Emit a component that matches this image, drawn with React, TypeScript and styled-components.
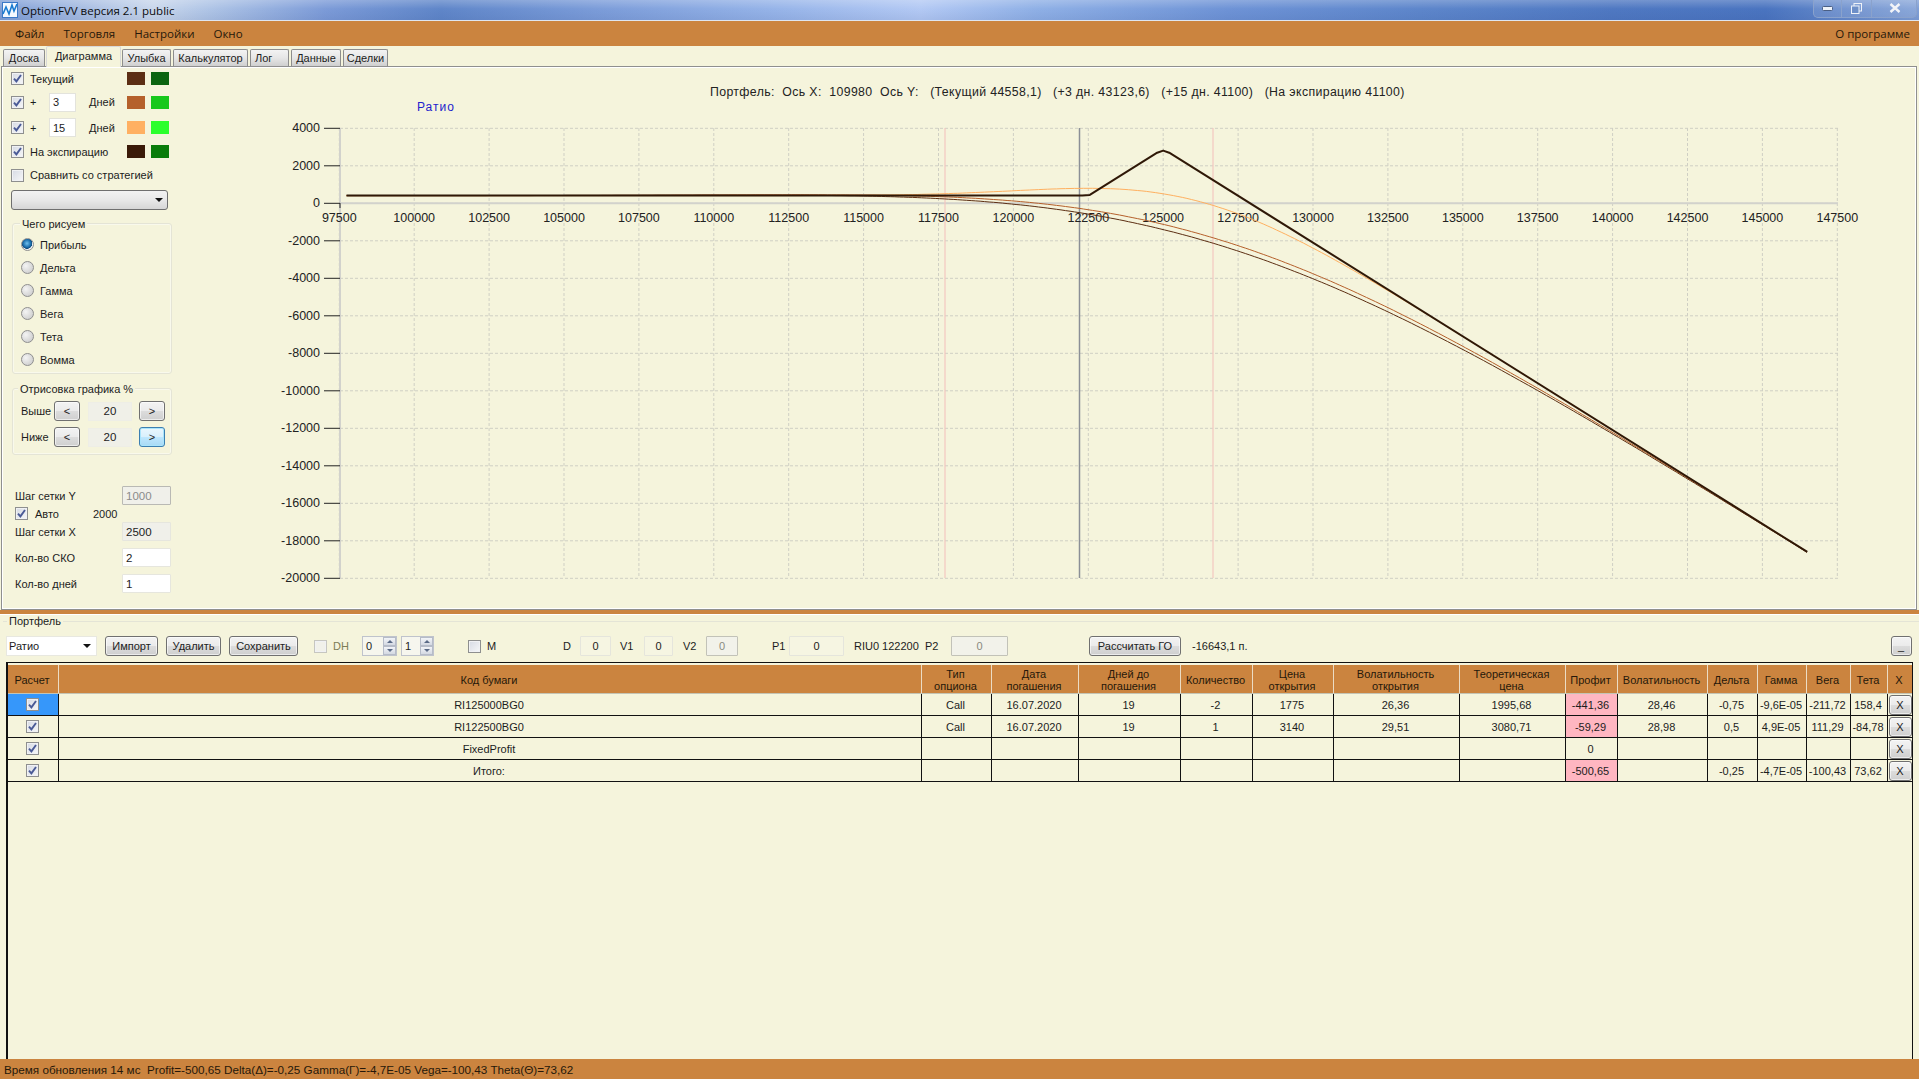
import React from "react";
import styled, { createGlobalStyle, css } from "styled-components";

const CREAM = "#f5f4dc";
const PERU = "#cb843f";
const UI = `"Liberation Sans", Arial, sans-serif`;
const WIN = `"Open Sans", "Noto Sans", sans-serif`;

const Global = createGlobalStyle`
  html, body { margin: 0; padding: 0; background: ${CREAM}; }
  * { box-sizing: border-box; }
`;

const Screen = styled.div`
  width: 1919px; height: 1079px; display: flex; flex-direction: column; overflow: hidden;
  font: 11px ${UI}; color: #1c1c1c; background: ${CREAM};
`;

/* ---------- window chrome ---------- */
const TitleBar = styled.div`
  height: 21px; flex: none; display: flex; align-items: center; position: relative;
  background:
    linear-gradient(180deg, rgba(255,255,255,.22), rgba(255,255,255,0) 45%, rgba(30,50,110,.08)),
    linear-gradient(90deg, #7f9ed6 0, #c9d7ec 8%, #aec4e6 11%, #7c9bd8 17%, #5f86c9 23%, #7b9cd9 31%, #95b3e8 40%, #b3c9f4 48%, #8fb0e6 54%, #6e93d6 64%, #5d86cb 74%, #4f78c2 84%, #4a74c0 92%, #7f9fd6 100%);
  border-bottom: 1px solid #dfe6f0;
`;
const AppIcon = styled.svg` width: 16px; height: 16px; margin-left: 2px; flex: none; `;
const TitleText = styled.span` margin-left: 3px; font: 11.5px ${WIN}; color: #0c0c0c; `;
const WinButtons = styled.div`
  margin-left: auto; margin-right: 2px; height: 18px; width: 104px; display: grid; grid-template-columns: 27px 30px 47px; margin-top: -3px;
  border: 1px solid #8aa2cc; border-top: 0; border-radius: 0 0 5px 5px; background: rgba(255,255,255,.1);
`;
const WinBtn = styled.div`
  display: flex; align-items: center; justify-content: center;
  & + & { border-left: 1px solid #8aa2cc; }
`;
const MenuBar = styled.div`
  height: 25px; flex: none; background: ${PERU}; display: flex; align-items: center; padding: 0 9px 0 15px; gap: 19px;
  font: 11.5px ${WIN}; color: #26180a;
`;
const MenuItem = styled.span<{ $right?: boolean }>` ${p => p.$right && css`margin-left: auto;`} `;
const TabStrip = styled.div`
  height: 20px; flex: none; display: flex; align-items: flex-end; padding-left: 3px; gap: 2px; position: relative; z-index: 1;
`;
const Tab = styled.div<{ $w: number; $active?: boolean; $left?: boolean }>`
  width: ${p => p.$w}px; height: 17px; display: flex; align-items: center; justify-content: ${p => p.$left ? "flex-start" : "center"}; font-size: 11px;
  ${p => p.$left && css`padding-left: 4px;`}
  border: 1px solid #8d8d8d; border-bottom: 0; border-radius: 2px 2px 0 0;
  background: linear-gradient(180deg, #f3f3f3, #e6e6e6 50%, #cfcfcf);
  ${p => p.$active && css`
    height: 21px; margin: 0 -1px 0 -1px; border-color: #d8d8d8; background: ${CREAM}; margin-bottom: -1px; border-bottom: 0; padding-bottom: 3px;
  `}
`;
const TabPage = styled.div`
  height: 544px; flex: none; margin: 0 2px 0 1px; border: 1px solid #8f8f8f; box-shadow: inset 0 0 0 1px #fff;
  display: flex; background: ${CREAM};
`;
const Splitter = styled.div` height: 4px; flex: none; background: ${PERU}; `;

/* ---------- left panel ---------- */
const Side = styled.div` width: 181px; flex: none; display: flex; flex-direction: column; padding-left: 9px; `;
const SideRow = styled.div<{ $h: number }>` height: ${p => p.$h}px; flex: none; display: flex; align-items: center; width: 158px; `;
const CheckBox = styled.span<{ $disabled?: boolean }>`
  width: 13px; height: 13px; flex: none; display: inline-flex; align-items: center; justify-content: center;
  border: 1px solid #8e8f8f; background: linear-gradient(135deg, #d6dae4, #f6f7f8);
  box-shadow: inset 0 0 0 1px #f0f1f4;
  ${p => p.$disabled && css`border-color: #c6c6c0; background: #f1f1ea;`}
`;
const Mark = styled.svg` width: 9px; height: 9px; `;
const SideLabel = styled.span<{ $ml?: number }>` margin-left: ${p => p.$ml ?? 6}px; flex: 1; white-space: nowrap; `;
const Plus = styled.span` margin-left: 6px; width: 19px; `;
const SmallInput = styled.span`
  width: 27px; height: 19px; background: #fff; border: 1px solid #e3e3dc; display: flex; align-items: center; padding-left: 3px; flex: none;
`;
const Swatch = styled.span<{ $c: string }>` width: 18px; height: 13px; flex: none; background: ${p => p.$c}; & + & { margin-left: 6px; } `;
const Combo = styled.div`
  width: 157px; height: 20px; margin: 2px 0 0 0; flex: none; border: 1px solid #6f6f6f; border-radius: 3px;
  background: linear-gradient(180deg, #f2f2f2, #e8e8e8 50%, #d6d6d6); display: flex; align-items: center; justify-content: flex-end; padding-right: 4px;
`;
const ComboArrow = styled.span` width: 0; height: 0; border: 4px solid transparent; border-top: 4px solid #111; border-bottom: 0; `;
const Group = styled.div<{ $h: number; $mt: number }>`
  position: relative; width: 160px; height: ${p => p.$h}px; margin: ${p => p.$mt}px 0 0 1px; flex: none;
  border: 1px solid #e4e4d6; border-radius: 3px; box-shadow: inset 0 0 0 1px rgba(255,255,255,.45);
`;
const Legend = styled.span<{ $l: number }>`
  position: absolute; left: ${p => p.$l}px; top: -6px; background: ${CREAM}; padding: 0 2px; line-height: 12px; white-space: nowrap;
`;
const RadioList = styled.div` padding-top: 9px; display: flex; flex-direction: column; `;
const RadioRow = styled.div` height: 23px; display: flex; align-items: center; padding-left: 8px; gap: 6px; `;
const Radio = styled.span<{ $on?: boolean }>`
  width: 13px; height: 13px; border-radius: 50%; border: 1px solid #8f8f8f; flex: none;
  background: radial-gradient(circle at 35% 35%, #f4f4f4, #cfcfcf 80%);
  ${p => p.$on && css`background: radial-gradient(circle at 45% 40%, #6fc0ee 0, #1769a8 45%, #154a78 58%, #eef0f2 62%);`}
`;
const StepList = styled.div` padding: 12px 0 0 8px; display: flex; flex-direction: column; gap: 6px; `;
const StepRow = styled.div` height: 20px; display: flex; align-items: center; `;
const StepName = styled.span` width: 33px; `;
const Btn = styled.div<{ $w: number; $hot?: boolean; $h?: number }>`
  width: ${p => p.$w}px; height: ${p => p.$h ?? 20}px; flex: none; display: flex; align-items: center; justify-content: center; border-radius: 3px;
  border: 1px solid #707070; box-shadow: inset 0 0 0 1px rgba(255,255,255,.6); color: #222;
  background: linear-gradient(180deg, #f3f3f3 0, #ebebeb 48%, #dcdcdc 52%, #cfcfcf 100%);
  ${p => p.$hot && css`
    border-color: #3c7fb1; box-shadow: inset 0 0 0 1px #a9e4fb;
    background: linear-gradient(180deg, #eaf6fd 0, #d9f0fc 48%, #bee6fd 52%, #a7d9f5 100%);
  `}
`;
const Readout = styled.span`
  width: 44px; height: 19px; margin: 0 7px 0 8px; flex: none; background: #f0f0e8; border: 1px solid #eeeee6;
  display: flex; align-items: center; justify-content: center; font-size: 11.5px;
`;
const FormBlock = styled.div` margin: 31px 0 0 4px; display: flex; flex-direction: column; width: 156px; `;
const FormRow = styled.div<{ $mt?: number }>` height: 19px; margin-top: ${p => p.$mt ?? 0}px; display: flex; align-items: center; justify-content: space-between; `;
const AutoRow = styled.div` height: 17px; display: flex; align-items: center; `;
const AutoLabel = styled.span` margin-left: 7px; width: 58px; `;
const FormInput = styled.span<{ $muted?: boolean; $grey?: boolean }>`
  width: 49px; height: 19px; background: ${p => (p.$muted || p.$grey ? "#f0f0ea" : "#fff")}; border: 1px solid ${p => p.$muted ? "#b9b9b4" : "#e6e6de"};
  color: ${p => p.$muted ? "#8b8b8b" : "#222"}; display: flex; align-items: center; padding-left: 3px; border-radius: 1px; font-size: 11.5px;
`;

/* ---------- chart ---------- */
const ChartPane = styled.div` flex: 1; min-width: 0; position: relative; display: flex; flex-direction: column; `;
const ChartTitle = styled.div`
  height: 47px; flex: none; padding: 18px 0 0 527px; font: 12.3px ${UI}; color: #222; white-space: pre; letter-spacing: .37px;
`;
const SeriesName = styled.div`
  position: absolute; left: 234px; top: 33px; font: 12px ${UI}; letter-spacing: 1px; color: #2222cc;
`;
const ChartSvg = styled.svg` display: block; flex: none; `;
const AxisLabel = styled.text` font: 12.5px ${UI}; fill: #222; `;

function cdf(x: number) {
  const t = 1 / (1 + 0.2316419 * Math.abs(x));
  const d = 0.3989423 * Math.exp((-x * x) / 2);
  const p = d * t * (0.3193815 + t * (-0.3565638 + t * (1.781478 + t * (-1.821256 + t * 1.330274))));
  return x > 0 ? 1 - p : p;
}
function call(f: number, k: number, iv: number, days: number) {
  const s = iv * Math.sqrt(days / 365);
  const d1 = (Math.log(f / k) + (s * s) / 2) / s;
  return f * cdf(d1) - k * cdf(d1 - s);
}
const px = (v: number) => 338.3 + ((v - 97500) / 2500) * 74.9;
const py = (v: number) => 203.3 - v * 0.01875;
const premium = 2 * 1775 - 3140;
function curve(days: number) {
  const pts: string[] = [];
  for (let v = 97740; v <= 146500; v += 150) {
    const val = premium + call(v, 122500, 0.2898, days) - 2 * call(v, 125000, 0.2846, days);
    pts.push(`${px(v).toFixed(1)},${py(val).toFixed(1)}`);
  }
  return pts.join(" ");
}
const expiry = [[97740, premium], [122300, premium], [122550, premium + 40], [124800, premium + 2290], [125000, premium + 2400], [125200, premium + 2290], [146500, premium + 2500 - 21500 * 1]]
  .map(([a, b]) => `${px(a).toFixed(1)},${py(b).toFixed(1)}`).join(" ");

const xVals = Array.from({ length: 21 }, (_, i) => 97500 + i * 2500);
const yVals = Array.from({ length: 13 }, (_, i) => 4000 - i * 2000);

function Chart() {
  return (
    <ChartSvg width={1733} height={495} viewBox="182 114 1733 495">
      {yVals.map(v => <line key={v} x1={339} x2={1837} y1={py(v)} y2={py(v)} stroke="#cfcfc4" strokeDasharray="3 2" />)}
      {xVals.map(v => <line key={v} x1={px(v)} x2={px(v)} y1={128} y2={578} stroke="#cfcfc4" strokeDasharray="3 2" />)}
      <line x1={339} x2={339} y1={128} y2={578} stroke="#d2d2cc" strokeWidth={2} />
      <line x1={339} x2={1837} y1={py(0)} y2={py(0)} stroke="#d2d2cc" strokeWidth={2} />
      <line x1={944} x2={944} y1={128} y2={578} stroke="#f3c6c0" strokeWidth={1.2} />
      <line x1={1212} x2={1212} y1={128} y2={578} stroke="#f3c6c0" strokeWidth={1.2} />
      <line x1={1078.5} x2={1078.5} y1={128} y2={578} stroke="#8b8f96" strokeWidth={1.5} />
      {yVals.map(v => <line key={v} x1={323} x2={339} y1={py(v)} y2={py(v)} stroke="#222" />)}
      <line x1={339} x2={339} y1={203} y2={208} stroke="#222" />
      {yVals.map(v => <AxisLabel key={v} x={319} y={py(v) + 3.7} textAnchor="end">{v}</AxisLabel>)}
      {xVals.map(v => <AxisLabel key={v} x={px(v)} y={221.5} textAnchor="middle">{v}</AxisLabel>)}
      <polyline points={curve(19)} fill="none" stroke="#5c2e12" strokeWidth={1} />
      <polyline points={curve(16)} fill="none" stroke="#b5602b" strokeWidth={1} />
      <polyline points={curve(4)} fill="none" stroke="#ffb060" strokeWidth={1} />
      <polyline points={expiry} fill="none" stroke="#2f1807" strokeWidth={2} strokeLinejoin="round" />
    </ChartSvg>
  );
}

/* ---------- portfolio ---------- */
const Portfolio = styled.div` flex: 1; min-height: 0; position: relative; display: flex; flex-direction: column; border-top: 1px solid #fff; padding-left: 6px; `;
const PortfolioLine = styled.div` position: absolute; left: 3px; right: 0; top: 6px; height: 1px; background: #e4e4d6; `;
const PortfolioLegend = styled.span` position: absolute; left: 7px; top: 0; padding: 0 2px; background: ${CREAM}; line-height: 12px; `;
const Toolbar = styled.div` height: 20px; margin-top: 21px; flex: none; display: flex; align-items: center; `;
const Drop = styled.div`
  width: 91px; height: 20px; background: #fff; border: 1px solid #e8e8e0; display: flex; align-items: center; justify-content: space-between; padding: 0 5px 0 2px; flex: none;
`;
const Gap = styled.span<{ $w: number }>` width: ${p => p.$w}px; flex: none; `;
const ToolText = styled.span<{ $w?: number; $dim?: boolean }>`
  flex: none; white-space: nowrap; ${p => p.$w && css`width: ${p.$w}px;`} ${p => p.$dim && css`color: #7d7d55;`}
`;
const ToolInput = styled.span<{ $w: number; $dim?: boolean }>`
  width: ${p => p.$w}px; height: 20px; flex: none; display: flex; align-items: center; justify-content: center;
  border: 1px solid ${p => p.$dim ? "#c2c2b8" : "#e5e5dc"}; border-radius: 1px; background: ${p => p.$dim ? "#f2f2ea" : "#f6f5e2"}; ${p => p.$dim && css`color: #8a8a80;`}
`;
const Spin = styled.div<{ $w: number }>`
  width: ${p => p.$w}px; height: 20px; flex: none; border: 1px solid #bfc3cc; background: #f6f6ee; display: flex; align-items: center; justify-content: space-between; padding-left: 3px;
`;
const SpinArrows = styled.div` width: 13px; height: 18px; display: flex; flex-direction: column; `;
const SpinArrow = styled.span<{ $up?: boolean }>`
  flex: 1; display: flex; align-items: center; justify-content: center; background: linear-gradient(180deg, #f2f4f8, #d4d9e2); border: 1px solid #b6bcc8;
  &::before { content: ""; border: 3px solid transparent; ${p => p.$up ? "border-bottom: 3px solid #5a6a86; border-top: 0;" : "border-top: 3px solid #5a6a86; border-bottom: 0;"} }
`;
const Grid = styled.div`
  flex: 1; min-height: 0; margin-top: 6px; width: 1907px; border: 1px solid #111; border-left-width: 2px; border-bottom: 0; padding-top: 2px; background: ${CREAM};
`;
const cols = "50px 863px 70px 87px 102px 72px 81px 126px 106px 52px 90px 50px 49px 44px 37px 25px";
const HeadRow = styled.div`
  display: grid; grid-template-columns: ${cols}; height: 29px; background: ${PERU}; border-bottom: 1px solid #c4c4b4;
`;
const HeadCell = styled.div`
  display: flex; align-items: center; justify-content: center; text-align: center; line-height: 12px; color: #26180a; padding: 1px 3px 0 1px; white-space: pre-line;
  & + & { border-left: 1px solid #ecdcc4; }
`;
const DataRow = styled.div`
  display: grid; grid-template-columns: ${cols}; height: 22px; border-bottom: 1px solid #111;
`;
const Cell = styled.div<{ $selected?: boolean; $pink?: boolean }>`
  display: flex; align-items: center; justify-content: center; white-space: nowrap; overflow: hidden; padding-right: 2px;
  & + & { border-left: 1px solid #111; }
  ${p => p.$selected && css`background: #3697fa;`}
  ${p => p.$pink && css`background: #ffb6c1;`}
`;
const ButtonCell = styled(Cell)` padding-right: 0; `;
const StatusBar = styled.div`
  height: 20px; flex: none; background: ${PERU}; display: flex; align-items: center; padding-left: 4px; font: 11.7px ${UI}; color: #26180a; white-space: pre;
`;

const Tick = () => (
  <Mark viewBox="0 0 9 9"><path d="M1 4.6 L3.4 7.4 L8 1" fill="none" stroke="#4a5a96" strokeWidth={1.9} /></Mark>
);
const Check = ({ on = true, disabled }: { on?: boolean; disabled?: boolean }) => (
  <CheckBox $disabled={disabled}>{on && <Tick />}</CheckBox>
);

const heads = ["Расчет", "Код бумаги", "Тип\nопциона", "Дата\nпогашения", "Дней до\nпогашения", "Количество", "Цена\nоткрытия", "Волатильность\nоткрытия", "Теоретическая\nцена", "Профит", "Волатильность", "Дельта", "Гамма", "Вега", "Тета", "X"];
const rows = [
  ["RI125000BG0", "Call", "16.07.2020", "19", "-2", "1775", "26,36", "1995,68", "-441,36", "28,46", "-0,75", "-9,6E-05", "-211,72", "158,4"],
  ["RI122500BG0", "Call", "16.07.2020", "19", "1", "3140", "29,51", "3080,71", "-59,29", "28,98", "0,5", "4,9E-05", "111,29", "-84,78"],
  ["FixedProfit", "", "", "", "", "", "", "", "0", "", "", "", "", ""],
  ["Итого:", "", "", "", "", "", "", "", "-500,65", "", "-0,25", "-4,7E-05", "-100,43", "73,62"],
];
const radios = ["Прибыль", "Дельта", "Гамма", "Вега", "Тета", "Вомма"];
const tabs: [string, number][] = [["Доска", 42], ["Диаграмма", 75], ["Улыбка", 49], ["Калькулятор", 75], ["Лог", 39], ["Данные", 50], ["Сделки", 45]];

export default function App() {
  return (
    <Screen>
      <Global />
      <TitleBar>
        <AppIcon viewBox="0 0 16 16">
          <rect width="16" height="16" fill="#f4f8ff" />
          <rect x=".5" y=".5" width="15" height="15" fill="none" stroke="#3a78c8" />
          <path d="M1 12 L4 5 L7 12 L10 3 L12 9 L15 2" fill="none" stroke="#1a7bd0" strokeWidth={1.6} />
        </AppIcon>
        <TitleText>OptionFVV версия 2.1 public</TitleText>
        <WinButtons>
          <WinBtn>
            <svg width="11" height="5"><rect x=".5" y=".5" width="10" height="4" rx="1" fill="#eef2f8" stroke="#4a5f85" /></svg>
          </WinBtn>
          <WinBtn>
            <svg width="11" height="11"><rect x="3" y=".5" width="7.5" height="7.5" fill="none" stroke="#eef2f8" /><rect x=".5" y="3" width="7.5" height="7.5" fill="#6d8fc8" stroke="#eef2f8" /></svg>
          </WinBtn>
          <WinBtn>
            <svg width="12" height="10"><path d="M1.5 1 L10.5 9 M10.5 1 L1.5 9" stroke="#f2f4f8" strokeWidth={2.4} /></svg>
          </WinBtn>
        </WinButtons>
      </TitleBar>
      <MenuBar>
        <MenuItem>Файл</MenuItem>
        <MenuItem>Торговля</MenuItem>
        <MenuItem>Настройки</MenuItem>
        <MenuItem>Окно</MenuItem>
        <MenuItem $right>О программе</MenuItem>
      </MenuBar>
      <TabStrip>
        {tabs.map(([t, w]) => <Tab key={t} $w={w} $active={t === "Диаграмма"} $left={t === "Лог"}>{t}</Tab>)}
      </TabStrip>
      <TabPage>
        <Side>
          <SideRow $h={23}><Check /><SideLabel>Текущий</SideLabel><Swatch $c="#5c2e14" /><Swatch $c="#0b6410" /></SideRow>
          <SideRow $h={24}><Check /><Plus>+</Plus><SmallInput>3</SmallInput><SideLabel $ml={13}>Дней</SideLabel><Swatch $c="#b5602b" /><Swatch $c="#17c81c" /></SideRow>
          <SideRow $h={27}><Check /><Plus>+</Plus><SmallInput>15</SmallInput><SideLabel $ml={13}>Дней</SideLabel><Swatch $c="#ffb062" /><Swatch $c="#2bff2d" /></SideRow>
          <SideRow $h={21}><Check /><SideLabel>На экспирацию</SideLabel><Swatch $c="#3a1a08" /><Swatch $c="#0a7c0a" /></SideRow>
          <SideRow $h={26}><Check on={false} /><SideLabel>Сравнить со стратегией</SideLabel></SideRow>
          <Combo><ComboArrow /></Combo>
          <Group $h={151} $mt={13}>
            <Legend $l={7}>Чего рисуем</Legend>
            <RadioList>
              {radios.map((r, i) => <RadioRow key={r}><Radio $on={i === 0} />{r}</RadioRow>)}
            </RadioList>
          </Group>
          <Group $h={67} $mt={14}>
            <Legend $l={5}>Отрисовка графика %</Legend>
            <StepList>
              <StepRow><StepName>Выше</StepName><Btn $w={26}>&lt;</Btn><Readout>20</Readout><Btn $w={26}>&gt;</Btn></StepRow>
              <StepRow><StepName>Ниже</StepName><Btn $w={26}>&lt;</Btn><Readout>20</Readout><Btn $w={26} $hot>&gt;</Btn></StepRow>
            </StepList>
          </Group>
          <FormBlock>
            <FormRow>Шаг сетки Y<FormInput $muted>1000</FormInput></FormRow>
            <AutoRow><Check /><AutoLabel>Авто</AutoLabel>2000</AutoRow>
            <FormRow>Шаг сетки X<FormInput $grey>2500</FormInput></FormRow>
            <FormRow $mt={7}>Кол-во СКО<FormInput>2</FormInput></FormRow>
            <FormRow $mt={7}>Кол-во дней<FormInput>1</FormInput></FormRow>
          </FormBlock>
        </Side>
        <ChartPane>
          <ChartTitle>{"Портфель:  Ось X:  109980  Ось Y:   (Текущий 44558,1)   (+3 дн. 43123,6)   (+15 дн. 41100)   (На экспирацию 41100)"}</ChartTitle>
          <SeriesName>Ратио</SeriesName>
          <Chart />
        </ChartPane>
      </TabPage>
      <Splitter />
      <Portfolio>
        <PortfolioLine />
        <PortfolioLegend>Портфель</PortfolioLegend>
        <Toolbar>
          <Drop>Ратио<ComboArrow /></Drop>
          <Gap $w={8} /><Btn $w={53}>Импорт</Btn>
          <Gap $w={8} /><Btn $w={55}>Удалить</Btn>
          <Gap $w={8} /><Btn $w={69}>Сохранить</Btn>
          <Gap $w={16} /><Check on={false} disabled /><Gap $w={6} /><ToolText $w={29} $dim>DH</ToolText>
          <Spin $w={35}>0<SpinArrows><SpinArrow $up /><SpinArrow /></SpinArrows></Spin>
          <Gap $w={4} />
          <Spin $w={33}>1<SpinArrows><SpinArrow $up /><SpinArrow /></SpinArrows></Spin>
          <Gap $w={34} /><Check on={false} /><Gap $w={6} /><ToolText $w={76}>M</ToolText>
          <ToolText $w={17}>D</ToolText><ToolInput $w={31}>0</ToolInput><Gap $w={9} />
          <ToolText $w={24}>V1</ToolText><ToolInput $w={29}>0</ToolInput><Gap $w={10} />
          <ToolText $w={23}>V2</ToolText><ToolInput $w={32} $dim>0</ToolInput><Gap $w={34} />
          <ToolText $w={17}>P1</ToolText><ToolInput $w={55}>0</ToolInput><Gap $w={10} />
          <ToolText $w={71}>RIU0 122200</ToolText><ToolText $w={26}>P2</ToolText>
          <ToolInput $w={57} $dim>0</ToolInput><Gap $w={81} />
          <Btn $w={92}>Рассчитать ГО</Btn><Gap $w={11} /><ToolText>-16643,1 п.</ToolText>
          <Gap $w={643} /><Btn $w={21}>_</Btn>
        </Toolbar>
        <Grid>
          <HeadRow>{heads.map(h => <HeadCell key={h}>{h}</HeadCell>)}</HeadRow>
          {rows.map((r, i) => (
            <DataRow key={r[0]}>
              <Cell $selected={i === 0}><Check /></Cell>
              {r.map((c, j) => <Cell key={j} $pink={j === 8 && c !== "0"}>{c}</Cell>)}
              <ButtonCell><Btn $w={23} $h={20}>X</Btn></ButtonCell>
            </DataRow>
          ))}
        </Grid>
      </Portfolio>
      <StatusBar>{"Время обновления 14 мс  Profit=-500,65 Delta(Δ)=-0,25 Gamma(Γ)=-4,7E-05 Vega=-100,43 Theta(Θ)=73,62"}</StatusBar>
    </Screen>
  );
}
